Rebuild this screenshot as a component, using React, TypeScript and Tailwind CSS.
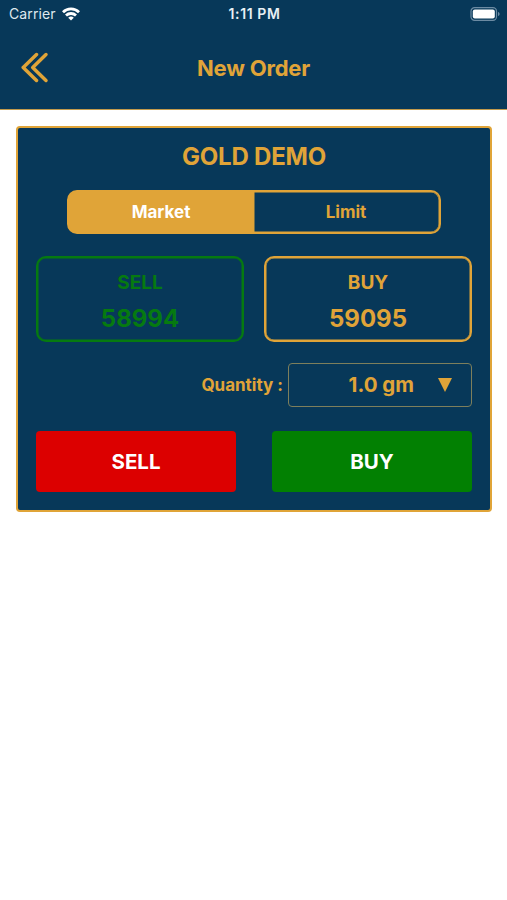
import React, { useState } from 'react'

interface Quote {
  side: string
  price: number
  className: string
}

const quotes: Quote[] = [
  { side: 'SELL', price: 58994, className: 'border-[#067a10] text-[#067a10] shadow-[inset_0_0_0_0.5px_#067a10]' },
  { side: 'BUY', price: 59095, className: 'border-[#e0a438] text-[#e0a438] shadow-[inset_0_0_0_0.5px_#e0a438]' },
]

function StatusBar() {
  return (
    <div className="grid h-7 grid-cols-[1fr_80px_1fr] items-center pl-[9px] pr-[7px] text-white">
      <div className="flex items-center gap-[6px]">
        <span className="text-[14px] leading-none tracking-[0.1px] text-[#dfe8ee]">Carrier</span>
        <svg width="18" height="14" viewBox="0 0 18 14" fill="none" stroke="currentColor" strokeWidth="2.8">
          <path d="M1 5.200a11.500 11.500 0 0 1 16 0" />
          <path d="M4 8.500a7.200 7.200 0 0 1 10 0" />
          <path d="M9 13.600 6.200 10.800a4 4 0 0 1 5.600 0z" fill="currentColor" stroke="none" />
        </svg>
      </div>
      <span className="text-center text-[14px] font-semibold leading-none tracking-[0.6px] text-[#e8f0f5]">1:11 PM</span>
      <div className="flex justify-end">
        <svg width="30" height="14" viewBox="0 0 30 14" fill="none">
          <rect x="1" y="0.7" width="25.5" height="12.6" rx="3.6" stroke="#6c8ba3" strokeWidth="1.2" />
          <rect x="2.8" y="2.5" width="22" height="9" rx="2" fill="#fff" />
          <path d="M28 5v4c1-.4 1.600-1.100 1.600-2S29 5.400 28 5z" fill="#6c8ba3" />
        </svg>
      </div>
    </div>
  )
}

export default function NewOrder() {
  const [orderType, setOrderType] = useState('Market')

  return (
    <div className="min-h-screen bg-white font-['Inter','Liberation_Sans',sans-serif]">
      {/* Header */}
      <header className="h-[110px] border-b border-[#c29b4d] bg-[#073859]">
        <StatusBar />
        <div className="grid h-20 grid-cols-[70px_1fr_70px] items-center">
          <button className="pl-[21px]" aria-label="Back">
            <svg
              width="28"
              height="32"
              viewBox="0 0 28 32"
              fill="none"
              stroke="#e0a438"
              strokeWidth="3.5"
              strokeLinecap="round"
              strokeLinejoin="round"
            >
              <path d="M15.500 2.500 2.200 15.500l13.300 13" />
              <path d="M25 2.500 11.700 15.500l13.300 13" />
            </svg>
          </button>
          <h1 className="text-center text-[22px] font-bold leading-none tracking-[-0.2px] text-[#e0a438]">New Order</h1>
        </div>
      </header>

      {/* Order card */}
      <main className="mx-4 mt-4 h-[386px] w-[476px] rounded-[4px] border-2 border-[#e0a438] bg-[#073859] px-[18px]">
        <h2 className="pt-[16px] text-center text-[24px] font-bold leading-[26px] tracking-[-0.2px] text-[#e0a438]">
          GOLD DEMO
        </h2>

        <div className="mx-auto mt-[20px] flex h-[44px] w-[374px]">
          {['Market', 'Limit'].map((type) => (
            <button
              key={type}
              onClick={() => setOrderType(type)}
              className={`w-1/2 border-2 border-[#e0a438] pr-[1px] text-[17px] font-bold leading-none shadow-[inset_0_0_0_0.5px_#e0a438] first:rounded-l-[10px] first:pl-[1px] first:pr-0 last:rounded-r-[10px] last:border-l-0 ${
                orderType === type ? 'bg-[#e0a438] text-white' : 'text-[#e0a438]'
              }`}
            >
              {type}
            </button>
          ))}
        </div>

        {/* Quotes */}
        <div className="mt-[22px] grid grid-cols-2 gap-[20px]">
          {quotes.map((quote) => (
            <div
              key={quote.side}
              className={`flex h-[86px] flex-col items-center justify-center gap-[16px] rounded-[10px] border-2 pt-[3px] font-bold leading-none ${quote.className}`}
            >
              <span className="text-[19px] leading-5">{quote.side}</span>
              <span className="text-[24px] leading-5">{quote.price}</span>
            </div>
          ))}
        </div>

        {/* Quantity */}
        <div className="mt-[21px] flex items-center justify-end gap-[5px] text-[#e0a438]">
          <span className="text-[17px] font-bold leading-none">Quantity :</span>
          <button className="flex h-[44px] w-[184px] items-center justify-end rounded-[4px] border border-[#7d7f5c] pr-[19px]">
            <span className="text-[20.5px] font-bold leading-none">1.0 gm</span>
            <svg className="ml-[24px]" width="14" height="14" viewBox="0 0 14 14" fill="currentColor">
              <path d="M0 0h14L7 14z" />
            </svg>
          </button>
        </div>

        {/* Actions */}
        <div className="mt-[24px] grid grid-cols-2 gap-[36px] text-[20.5px] font-bold leading-none text-white">
          <button className="h-[61px] rounded-[4px] bg-[#dc0000] pt-[2px]">SELL</button>
          <button className="h-[61px] rounded-[4px] bg-[#028002] pt-[2px]">BUY</button>
        </div>
      </main>
    </div>
  )
}
